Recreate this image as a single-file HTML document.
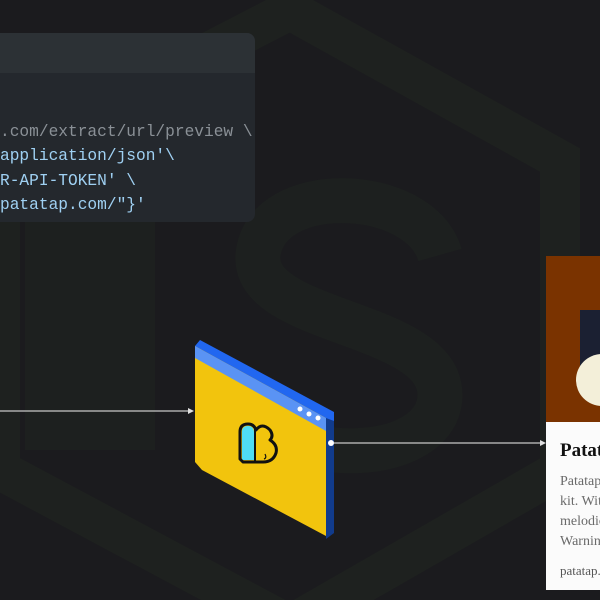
<!DOCTYPE html>
<html><head><meta charset="utf-8"><style>
html,body{margin:0;padding:0;}
body{width:600px;height:600px;background:#1b1b1e;position:relative;overflow:hidden;font-family:"Liberation Sans",sans-serif;}
.code{position:absolute;left:-20px;top:33px;width:275px;height:189px;background:#24282d;border-radius:8px;overflow:hidden;}
.code .hd{height:40px;background:#2c3135;}
.code pre{margin:0;position:absolute;left:20px;top:87px;font-family:"Liberation Mono",monospace;font-size:16.2px;line-height:24.3px;color:#9fd0f2;}
.g{color:#8a9096;}
.card{position:absolute;left:546px;top:256px;width:70px;height:334px;background:#fbfbfb;overflow:hidden;}
.img{height:166px;background:#7a3300;position:relative;}
.card h3{margin:0;position:absolute;left:14px;top:184px;font-family:"Liberation Serif",serif;font-size:19px;font-weight:bold;color:#111;white-space:nowrap;}
.card p{margin:0;position:absolute;left:14px;top:216px;font-family:"Liberation Serif",serif;font-size:14px;line-height:20px;color:#6a6a6a;white-space:nowrap;}
.card .u{top:305px;font-size:13px;color:#555;}
</style></head><body>
<svg width="600" height="600" style="position:absolute;left:0;top:0">
<g fill="none" stroke="#1e211f" stroke-width="40">
<polygon points="290,10 560,160 560,470 290,625 0,470 0,160"/>
</g>
<rect x="25" y="190" width="130" height="260" fill="#1d201f"/>
<path d="M440 255 C420 185 265 180 258 255 C252 325 440 320 440 395 C440 465 285 470 250 405" fill="none" stroke="#1d201f" stroke-width="45"/>
<line x1="0" y1="411" x2="189" y2="411" stroke="#c8c8c8" stroke-width="1.2"/>
<polygon points="188,408 194,411 188,414" fill="#e0e0e0"/>
<line x1="331" y1="443" x2="542" y2="443" stroke="#c8c8c8" stroke-width="1.2"/>
<polygon points="540,440 546,443 540,446" fill="#e0e0e0"/>
<polygon points="326,415 334,419 334,533 326,539" fill="#113b8c"/>
<polygon points="195,346 200,340 334,412 334,421 326,418" fill="#2167f0"/>
<polygon points="195,346 326,418 326,536 202,470 195,462" fill="#f2c40d"/>
<polygon points="195,346 326,418 326,431 195,358" fill="#5a93f4"/>
<circle cx="300" cy="409" r="2.5" fill="#fff"/>
<circle cx="309" cy="414" r="2.5" fill="#fff"/>
<circle cx="318" cy="418" r="2.5" fill="#fff"/>
<circle cx="331" cy="443" r="3" fill="#fff"/>
<path d="M243 462 L240 459 L240 432 Q240 424 248 424 Q254 424 256 430 Q262 422 270 430 Q274 436 270 440 Q278 445 276 453 Q273 462 263 462 Z" fill="#f2c40d" stroke="#111" stroke-width="3" stroke-linejoin="round"/>
<path d="M242 459 L242 432 Q242 426 248 426 Q254 426 254 433 L254 460 L243 460 Z" fill="#4fdcf5"/>
<line x1="255" y1="428" x2="255" y2="461" stroke="#111" stroke-width="2"/>
<path d="M265 454 Q267 458 264 459" fill="none" stroke="#111" stroke-width="1.2"/>
</svg>
<div class="code"><div class="hd"></div><pre><span class="g">.com/extract/url/preview \</span>
application/json'\
R-API-TOKEN' \
patatap.com/"}'</pre></div>
<div class="card"><div class="img">
<div style="position:absolute;left:34px;top:54px;width:40px;height:80px;background:#1b2032"></div>
<div style="position:absolute;left:30px;top:98px;width:52px;height:52px;border-radius:50%;background:#f3efd9"></div>
</div>
<h3>Patatap</h3>
<p>Patatap<br>kit. With<br>melodic<br>Warning</p>
<p class="u">patatap.com</p>
</div>
</body></html>
